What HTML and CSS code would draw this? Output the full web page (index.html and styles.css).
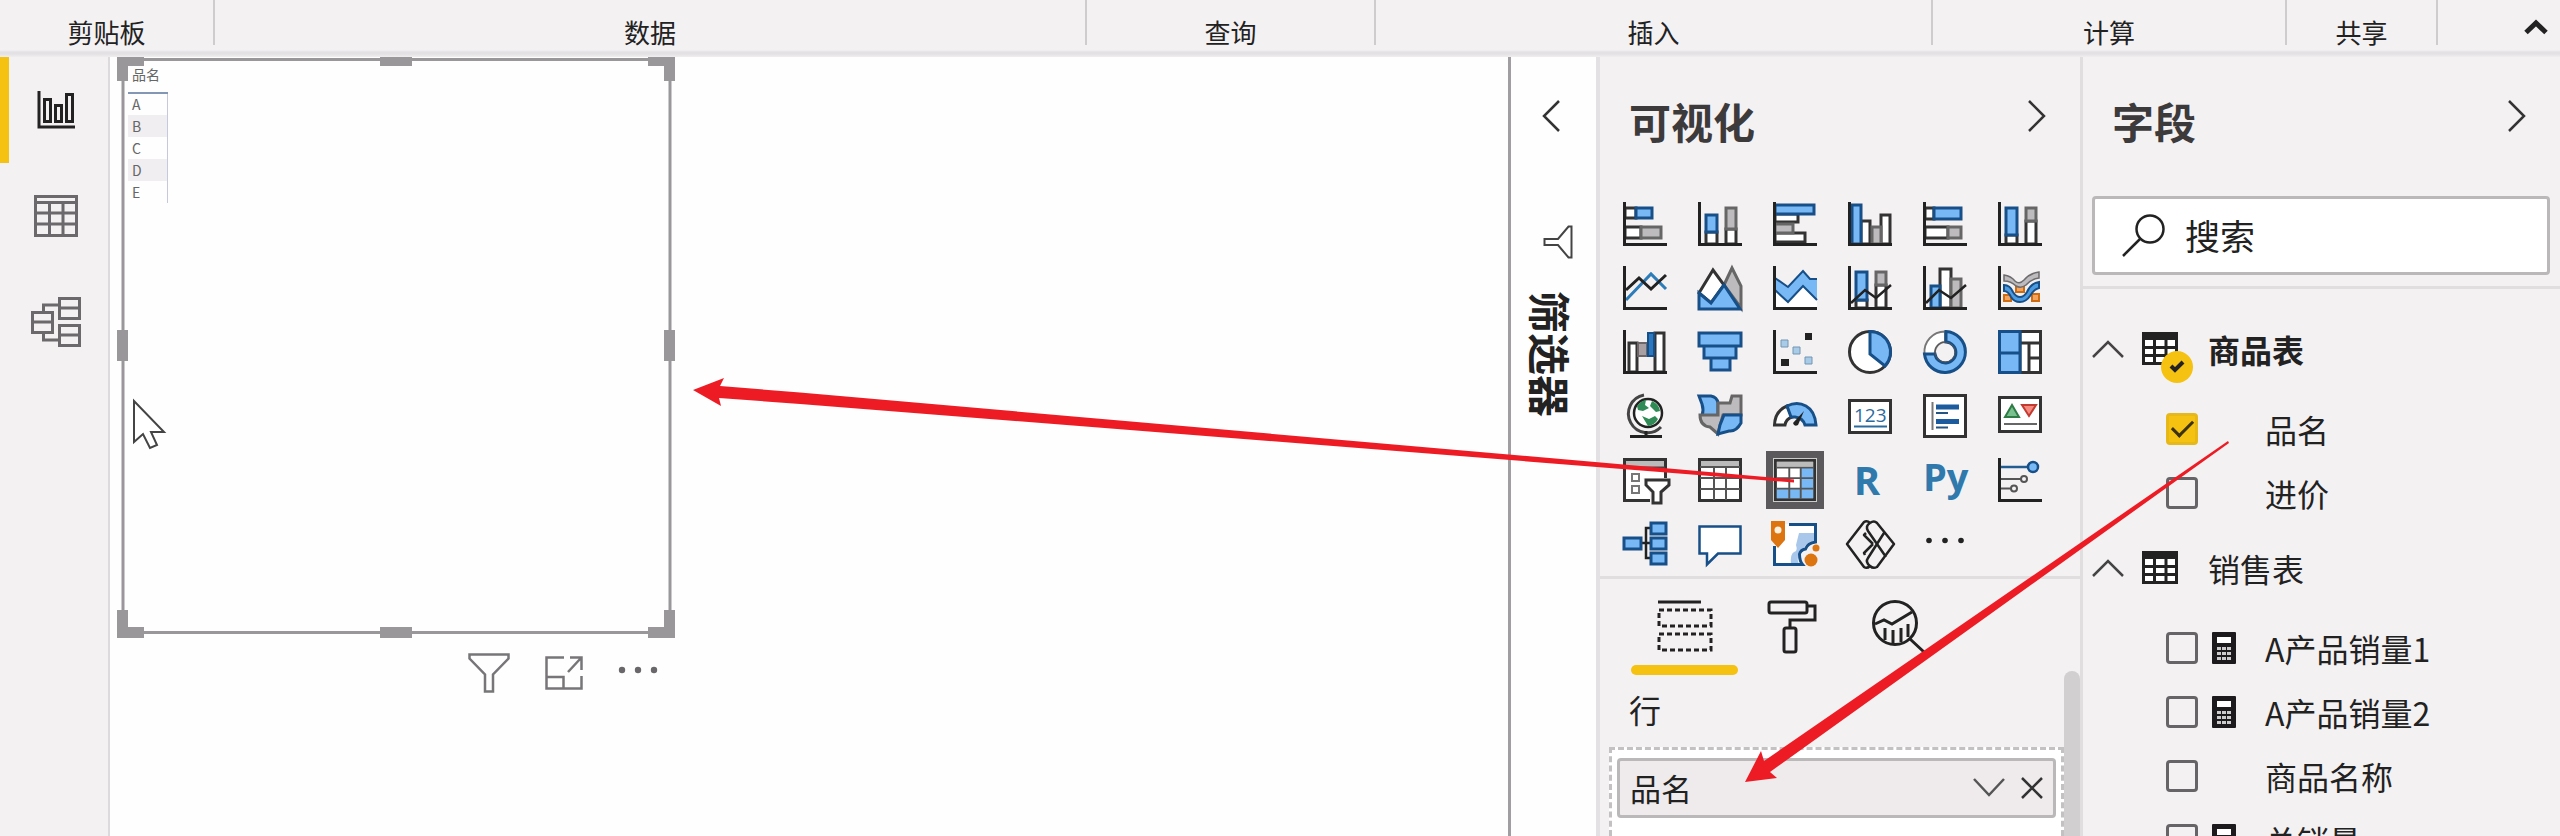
FILE: index.html
```html
<!DOCTYPE html>
<html lang="zh-CN">
<head>
<meta charset="utf-8">
<title>报表视图</title>
<link rel="stylesheet" href="styles.css">
</head>
<body>
<header class="ribbon">
  <div class="group g-clip">剪贴板</div>
  <div class="group g-data">数据</div>
  <div class="group g-query">查询</div>
  <div class="group g-insert">插入</div>
  <div class="group g-calc">计算</div>
  <div class="group g-share">共享</div>
  <button class="collapse" aria-label="折叠功能区"><svg width="24" height="16" viewBox="0 0 24 16"><path d="M2 13.500 12 4l10 9.500" fill="none" stroke="#222" stroke-width="5"/></svg></button>
</header>

<main class="workspace">
  <nav class="rail">
    <button class="view active" aria-label="报表"><svg width="38" height="38" viewBox="0 0 38 38" fill="none" stroke="#222" stroke-width="3"><path d="M2 0v36h36"/><rect x="7.500" y="8.500" width="6" height="22"/><rect x="18.500" y="14.500" width="6" height="16"/><rect x="29.500" y="3.500" width="6" height="27"/></svg></button>
    <button class="view" aria-label="数据"><svg width="44" height="42" viewBox="0 0 44 42" fill="none" stroke="#6b696b" stroke-width="3"><rect x="1.500" y="1.500" width="41" height="39"/><path d="M1 7.500h42M1 18h42M1 29h42M15.500 7v34M29 7v34"/></svg></button>
    <button class="view" aria-label="模型"><svg width="50" height="50" viewBox="0 0 50 50" fill="none" stroke="#6b696b" stroke-width="3"><rect x="28.500" y="1.500" width="20" height="20"/><rect x="28.500" y="28.500" width="20" height="20"/><rect x="1.500" y="15.500" width="20" height="20"/><path d="M28 11h20M28 38h20M1 25h20M12.500 15V8H28M12.500 36v7H28"/></svg></button>
  </nav>

  <section class="canvas">
    <div class="visual">
      <table class="matrix">
        <thead><tr><th>品名</th></tr></thead>
        <tbody><tr><td>A</td></tr><tr><td>B</td></tr><tr><td>C</td></tr><tr><td>D</td></tr><tr><td>E</td></tr></tbody>
      </table>
      <svg class="frame" viewBox="0 0 558 581" preserveAspectRatio="none">
        <rect x="6" y="2.500" width="547" height="573" fill="none" stroke="#99979a" stroke-width="3"/>
        <g fill="#99979a"><path d="M0 0h27v9H11v15H0zM531 0h27v24h-11V9h-16zM0 553h11v17h16v11H0zM547 553h11v28h-27v-11h16z"/><path d="M263 0h32v9h-32zM263 570h32v11h-32zM0 273h11v31H0zM547 273h11v31h-11z"/></g>
      </svg>
      <div class="visual-tools">
        <button aria-label="筛选器"><svg width="42" height="40" viewBox="0 0 42 40"><path d="M1.500 1.500h39v4L25 21.500v17h-8v-17L1.500 5.500z" fill="none" stroke="#777578" stroke-width="2.500"/></svg></button>
        <button aria-label="焦点模式"><svg width="38" height="34" viewBox="0 0 38 34" fill="none" stroke="#777578" stroke-width="2.500"><path d="M19 1.500H1.500v31h35V20M25 1.500h11.500V14M36 2 23 16M2 21h16.500v11"/></svg></button>
        <button aria-label="更多选项"><svg width="40" height="34" viewBox="0 0 40 34" fill="#69676a"><circle cx="4" cy="14" r="3.200"/><circle cx="20" cy="14" r="3.200"/><circle cx="36" cy="14" r="3.200"/></svg></button>
      </div>
    </div>
    <svg class="pointer" width="36" height="52" viewBox="0 0 36 52"><path d="M2 2v41l9-8 7 14 7-3-6-13h13z" fill="#fff" stroke="#444" stroke-width="2"/></svg>
  </section>

  <aside class="filters">
    <button aria-label="展开筛选器"><svg width="18" height="32" viewBox="0 0 18 32"><path d="M17 1 2 16l15 15" fill="none" stroke="#333" stroke-width="2.500"/></svg></button>
    <svg class="filters-icon" width="30" height="34" viewBox="0 0 30 34"><path d="M28.500 1.500v31h-3L15 20H1.500v-6H15L25.500 1.500z" fill="none" stroke="#444" stroke-width="2"/></svg>
    <h2 class="vertical">筛选器</h2>
  </aside>

  <aside class="viz">
    <div class="pane-head"><h2>可视化</h2><button aria-label="折叠可视化"><svg width="18" height="32" viewBox="0 0 18 32"><path d="M1 1l15 15L1 31" fill="none" stroke="#333" stroke-width="2.500"/></svg></button></div>
    <div class="gallery">
      <button aria-label="堆积条形图"><svg viewBox="0 0 44 44"><g class="w"><path d="M2 6h11v10H2zM2 25h16v11H2z"/></g><path class="b" d="M13 6h16v10H13z"/><path class="g" d="M18 25h20v11H18z"/><path class="ax" d="M1.500 0v42.500H44"/></svg></button>
      <button aria-label="堆积柱形图"><svg viewBox="0 0 44 44"><path class="w" d="M8 30h11v12H8zM28 27h10v15H28z"/><path class="b" d="M8 13h11v17H8z"/><path class="g" d="M28 6h10v21H28z"/><path class="ax" d="M1.500 0v42.500H44"/></svg></button>
      <button aria-label="簇状条形图"><svg viewBox="0 0 44 44"><path class="w" d="M2 12h23v8H2zM2 31h30v9H2z"/><path class="b" d="M2 3h39v9H2z"/><path class="g" d="M2 22h18v9H2z"/><path class="ax" d="M1.500 0v42.500H44"/></svg></button>
      <button aria-label="簇状柱形图"><svg viewBox="0 0 44 44"><path class="w" d="M13 19h9v23h-9zM33 13h9v29h-9z"/><path class="b" d="M4 3h9v39H4z"/><path class="g" d="M24 25h9v17h-9z"/><path class="ax" d="M1.500 0v42.500H44"/></svg></button>
      <button aria-label="百分比堆积条形图"><svg viewBox="0 0 44 44"><path class="w" d="M2 6h9v11H2zM2 25h23v11H2z"/><path class="b" d="M11 6h27v11H11z"/><path class="g" d="M25 25h13v11H25z"/><path class="ax" d="M1.500 0v42.500H44"/></svg></button>
      <button aria-label="百分比堆积柱形图"><svg viewBox="0 0 44 44"><path class="w" d="M8 33h11v9H8zM28 19h10v23H28z"/><path class="b" d="M8 6h11v27H8z"/><path class="g" d="M28 6h10v13H28z"/><path class="ax" d="M1.500 0v42.500H44"/></svg></button>

      <button aria-label="折线图"><svg viewBox="0 0 44 44"><path d="M3 34 28 8l15 15" fill="none" stroke="#2b7cb8" stroke-width="3"/><path d="M3 24 16 12l12 11L43 9" fill="none" stroke="#222" stroke-width="3"/><path class="ax" d="M1.500 0v42.500H44"/></svg></button>
      <button aria-label="分区图"><svg viewBox="0 0 44 44"><path class="g" d="M26 19 34 2l9 18v22z"/><path class="w" d="M1 27 15 4l11 15-13 18z"/><path class="b" d="M1 27l12 10 13-18 16 24H1z"/></svg></button>
      <button aria-label="堆积面积图"><svg viewBox="0 0 44 44"><path fill="#fff" d="M2 24l13 12 15-16 14 14v8H2z"/><path fill="#78b9f5" d="M2 12l13 9L30 5l7 8h7v21L30 20 15 36 2 24z"/><path d="M2 12l13 9L30 5l7 8h7M2 24l13 12 15-16 14 14" fill="none" stroke="#174f88" stroke-width="2"/><path class="ax" d="M1.500 0v42.500H44"/></svg></button>
      <button aria-label="折线和堆积柱形图"><svg viewBox="0 0 44 44"><path class="w" d="M8 34h11v8H8zM28 19h10v23H28z"/><path class="b" d="M8 6h11v28H8z"/><path class="g" d="M28 6h10v13H28z"/><path class="ax" d="M1.500 0v42.500H44"/><path d="M3 37l14-13 11 8 15-13" fill="none" stroke="#222" stroke-width="2.500"/></svg></button>
      <button aria-label="折线和簇状柱形图"><svg viewBox="0 0 44 44"><path class="w" d="M17 3h11v39H17z"/><path class="b" d="M8 20h9v22H8z"/><path class="g" d="M28 13h10v29H28z"/><path class="ax" d="M1.500 0v42.500H44"/><path d="M3 37l13-13 12 8 15-13" fill="none" stroke="#222" stroke-width="2.500"/></svg></button>
      <button aria-label="功能区图表"><svg viewBox="0 0 44 44"><g fill="#f2a35e" stroke="#cf6c10" stroke-width="2"><path d="M6 29h7v6H6zM18 20h8v6h-8zM34 28h7v7h-7z"/></g><path d="M6 9q7 1 11 6 4 4 9-1 6-7 15-8v6q-8 1-13 7-5 4-10 1-5-5-12-5z" fill="#bdbbbd" stroke="#6d6b6d" stroke-width="1.500"/><path d="M6 19q6 0 9 7 3 5 7 5t7-5q4-9 12-10v6q-5 1-9 8-4 6-10 6t-9-5q-3-6-7-6z" fill="#4d9be0" stroke="#174f88" stroke-width="2"/><path class="ax" d="M1.500 0v42.500H44"/></svg></button>

      <button aria-label="瀑布图"><svg viewBox="0 0 44 44"><path class="w" d="M6 13h8v29H6zM32 3h9v39h-9z"/><path d="M15 13h9v13h-9z" fill="#a9a0a3" stroke="#6d6669" stroke-width="2"/><path d="M25 3h6v23h-6z" fill="#2b78c0" stroke="#174f88" stroke-width="2"/><path class="ax" d="M1.500 0v42.500H44"/></svg></button>
      <button aria-label="漏斗图"><svg viewBox="0 0 44 44"><path class="b" d="M1 3h42v13H1zM6 16h32v12H6zM13 28h19v12H13z"/></svg></button>
      <button aria-label="散点图"><svg viewBox="0 0 44 44"><path d="M32 3h7v7h-7zM8 29h8v7H8z" fill="#222"/><path d="M8 10h7v7H8zM20 17h7v7h-7zM32 27h7v7h-7z" fill="#a8cbe8" stroke="#7295b5"/><path class="ax" d="M1.500 0v42.500H44"/></svg></button>
      <button aria-label="饼图"><svg viewBox="0 0 44 44"><circle cx="22" cy="22" r="20.500" class="w"/><path class="b" d="M22 1.500A20.500 20.500 0 0 1 37 36L22 24z"/></svg></button>
      <button aria-label="环形图"><svg viewBox="0 0 44 44"><path d="M1.500 24A20.500 20.500 0 0 1 22 1.500V12A10.500 10.500 0 0 0 12 24z" fill="#fff" stroke="#777" stroke-width="2"/><path class="b" d="M23 1.500A20.500 20.500 0 1 1 1.500 24H12a10.500 10.500 0 1 0 11-12z"/><circle cx="22" cy="22" r="10" fill="none" stroke="#555" stroke-width="1"/></svg></button>
      <button aria-label="树状图"><svg viewBox="0 0 44 44"><path class="w" d="M22 1.500h20.500v41H22zM22 13h20M31 13v29M31 28h11"/><path class="b" d="M1.500 1.500H22v41H1.500zM2 23h20"/></svg></button>

      <button aria-label="地图"><svg viewBox="0 0 44 44"><circle cx="25" cy="19" r="14" fill="#fff" stroke="#222" stroke-width="2.500"/><path d="M14 12q5-6 9-6l-1 5 4 3-6 3-5-1zM29 7q7 3 8 10l-4 1-6-6zM19 22l7 3 6-3 3 3q-3 6-10 7z" fill="#2f8a55"/><path d="M21 1A19 19 0 1 0 38 33" fill="none" stroke="#444" stroke-width="3"/><path d="M23 37v5M7 42.500h32" stroke="#222" stroke-width="3"/></svg></button>
      <button aria-label="着色地图"><svg viewBox="0 0 44 44"><path class="b" d="M1 2h12q6 1 7 7v13H4q2-6 0-12z"/><path class="g" d="M20 9h12l2-7h9v19H25l-3 11-2 8-8-7Q2 32 2 21h18z"/><path class="b" d="M26 21h17v8q-5 9-12 8l-11 3 2-9z"/></svg></button>
      <button aria-label="仪表"><svg viewBox="0 0 44 44"><path class="w" d="M1.500 31Q2 17 14 12l5 11q-6 2-7 8z"/><path class="b" d="M14 12Q24 7 33 12q9 5 10 19H32q-2-7-10-8h-4z"/><path d="M31 17 25 31q-4 2-5-2z" fill="#222"/></svg></button>
      <button aria-label="卡片图"><svg viewBox="0 0 44 44"><rect class="w" x="1.500" y="6.500" width="41" height="32"/><text x="6" y="28" class="digits">123</text><path d="M6 32.500h33" stroke="#2c6a9d" stroke-width="2"/></svg></button>
      <button aria-label="多行卡"><svg viewBox="0 0 44 44"><rect class="w" x="1.500" y="1.500" width="41" height="41"/><path d="M9.500 8v28" stroke="#777" stroke-width="2"/><path d="M13 13h23M13 27.500h23" stroke="#1c5c9e" stroke-width="5"/><path d="M13 19h12M13 33.500h12" stroke="#245481" stroke-width="2"/></svg></button>
      <button aria-label="KPI"><svg viewBox="0 0 44 44"><rect class="w" x="1.500" y="3.500" width="41" height="34"/><path d="M7 23h14L14 11z" fill="#78c08d" stroke="#2e7b46" stroke-width="2"/><path d="M24 11h14l-7 11z" fill="#f58b7e" stroke="#c33a30" stroke-width="2"/><path d="M6 30h33" stroke="#666" stroke-width="2"/></svg></button>

      <button aria-label="切片器"><svg viewBox="0 0 44 44"><rect class="w" x="1.500" y="1.500" width="41" height="41"/><path d="M3 3h38v6H3z" fill="#bbb"/><path d="M2 9.500h40" stroke="#444" stroke-width="2"/><g fill="#fff" stroke="#777" stroke-width="2"><path d="M9 16h7v7H9zM9 28h7v7H9z"/></g><path d="M20 20h28v26H27V36z" fill="#f4f1f3"/><path class="w" d="M23 22h23v5l-8 7v11h-8V34l-7-7z"/></svg></button>
      <button aria-label="表"><svg viewBox="0 0 44 44"><rect class="w" x="1.500" y="1.500" width="41" height="41"/><path d="M3 3h38v5H3z" fill="#bbb"/><path d="M2 9h40M2 20h40M2 31h40M16 9v33M28 9v33" stroke="#555" stroke-width="2"/></svg></button>
      <button class="selected" aria-label="矩阵" aria-pressed="true"><svg viewBox="0 0 44 44"><rect class="w" x="1.500" y="1.500" width="41" height="41"/><path d="M3 3h38v5H3z" fill="#bbb"/><path d="M28 9h13v32H3V31h25z" fill="#78b9f5"/><path d="M2 9h40M2 20h40M2 31h40M16 9v33M28 9v33" stroke="#555" stroke-width="2"/></svg></button>
      <button class="lang">R</button>
      <button class="lang py">Py</button>
      <button aria-label="关键影响者"><svg viewBox="0 0 44 44" fill="none" stroke="#555" stroke-width="2"><path d="M3 9h27" stroke="#215d92" stroke-width="2.500"/><circle cx="35" cy="9" r="5" fill="#78b9f5" stroke="#174f88" stroke-width="2.500"/><path d="M3 21h20M3 30.500h10"/><circle cx="26" cy="21" r="3"/><circle cx="16" cy="30.500" r="3"/><path class="ax" d="M1.500 0v42.500H44"/></svg></button>

      <button aria-label="分解树"><svg viewBox="0 0 44 44"><path d="M17 21h11M28 6h-5v30h5" fill="none" stroke="#222" stroke-width="2.500"/><path class="b" d="M1 16h17v11H1zM28 1h15v11H28zM28 16h15v11H28zM28 31h15v11H28z"/></svg></button>
      <button aria-label="问答"><svg viewBox="0 0 44 44"><path d="M1.500 4.500h41v27H20l-11 11v-11H1.500z" fill="#fff" stroke="#174f88" stroke-width="2.500"/></svg></button>
      <button aria-label="ArcGIS 地图"><svg viewBox="0 0 44 44"><path d="M2 2h41v19q-8 1-10 6-2 4-6 5-1 8 2 11H2z" fill="#fff"/><path d="M26 11h15v8q-8 1-10 7-5 2-6 7-1 5 1 9h-8q-1-10 3-12 4-1 2-7z" fill="#a9c7ea"/><path d="M16 2.500h26.500V20q-8 1-10 7-5 1-6 5 0 7 3 10.500H1.500V24" fill="none" stroke="#174f88" stroke-width="3"/><path d="M-2-1h14v19l-7 8-7-8z" fill="#dc7410"/><circle cx="5" cy="8" r="3.500" fill="#fff0df"/><circle cx="38" cy="38" r="6.500" fill="#dc7410"/><circle cx="43" cy="26" r="3.500" fill="#dc7410"/></svg></button>
      <button aria-label="Power Apps"><svg viewBox="0 0 44 44" fill="none" stroke="#222" stroke-width="2.500" stroke-linejoin="round"><path d="M22 1q-3-3-6-1L-1 22 16 45q3 2 6-1"/><path d="M22 1q4-3 7 0L46 22 29 45q-4 2-7-1-5-4-2-8L36 11M22 1q-5 3-2 8l18 26M18 11l-2 2 9 9M17 33l-1-2 9-9"/></svg></button>
      <button aria-label="更多视觉对象"><svg viewBox="0 0 44 44" fill="#222"><circle cx="6" cy="18.500" r="2.800"/><circle cx="22" cy="18.500" r="2.800"/><circle cx="38" cy="18.500" r="2.800"/></svg></button>
    </div>

    <div class="build">
      <div class="build-main">
        <div class="tabs">
          <button class="tab on" aria-label="字段"><svg width="54" height="54" viewBox="0 0 54 54" fill="none" stroke="#222" stroke-width="3"><path d="M0 2h43"/><path d="M1 10h52v16H1zM1 34h52v16H1z" stroke-dasharray="5 3"/></svg></button>
          <button class="tab" aria-label="格式"><svg width="50" height="54" viewBox="0 0 50 54" fill="none" stroke="#222" stroke-width="3"><rect x="2" y="2" width="38" height="11" rx="2"/><path d="M40 6h8v14H23v8"/><rect x="17" y="28" width="12" height="24" rx="2"/></svg></button>
          <button class="tab" aria-label="分析"><svg width="54" height="54" viewBox="0 0 54 54" fill="none" stroke="#222" stroke-width="3"><circle cx="23" cy="23" r="21.500"/><path d="M3 24l9-4 8 4 20-12M13 28v12M21 30v14M29 28v14M36 24v13M38 39l14 13"/></svg></button>
        </div>
        <h3>行</h3>
        <div class="well">
          <div class="chip"><span>品名</span>
            <button aria-label="选项"><svg width="32" height="20" viewBox="0 0 32 20"><path d="M1 1l15 16L31 1" fill="none" stroke="#555" stroke-width="2.500"/></svg></button>
            <button aria-label="删除"><svg width="22" height="22" viewBox="0 0 22 22"><path d="M1 1l20 20M21 1 1 21" stroke="#333" stroke-width="2.500"/></svg></button>
          </div>
        </div>
      </div>
      <div class="scrollbar"></div>
    </div>
  </aside>

  <aside class="fields">
    <div class="pane-head"><h2>字段</h2><button aria-label="折叠字段"><svg width="18" height="32" viewBox="0 0 18 32"><path d="M1 1l15 15L1 31" fill="none" stroke="#333" stroke-width="2.500"/></svg></button></div>
    <label class="search"><svg width="44" height="44" viewBox="0 0 44 44"><circle cx="28" cy="15" r="13.500" fill="none" stroke="#222" stroke-width="2.500"/><path d="M18 25 1 42" stroke="#222" stroke-width="2.500"/></svg><input type="text" placeholder="搜索" aria-label="搜索"></label>
    <div class="tree">
      <button class="entity strong"><svg class="caret" width="32" height="18" viewBox="0 0 32 18"><path d="M1 17 16 2l15 15" fill="none" stroke="#444" stroke-width="2.500"/></svg>
        <span class="entity-icon"><svg width="36" height="33" viewBox="0 0 36 33"><rect x="1.500" y="1.500" width="33" height="30" fill="#fff" stroke="#222" stroke-width="3"/><path d="M1 1h34v7H1z" fill="#222"/><path d="M1 15.500h34M1 23.500h34M12.500 8v24M24 8v24" stroke="#222" stroke-width="3"/></svg><svg class="badge" width="32" height="32" viewBox="0 0 32 32"><circle cx="16" cy="16" r="16" fill="#f5c211"/><path d="M10 15l4 4 8-8" fill="none" stroke="#222" stroke-width="4"/></svg></span>商品表</button>
      <label class="field"><input type="checkbox" checked><i></i>品名</label>
      <label class="field"><input type="checkbox"><i></i>进价</label>
      <button class="entity"><svg class="caret" width="32" height="18" viewBox="0 0 32 18"><path d="M1 17 16 2l15 15" fill="none" stroke="#444" stroke-width="2.500"/></svg>
        <span class="entity-icon"><svg width="36" height="33" viewBox="0 0 36 33"><rect x="1.500" y="1.500" width="33" height="30" fill="#fff" stroke="#222" stroke-width="3"/><path d="M1 1h34v7H1z" fill="#222"/><path d="M1 15.500h34M1 23.500h34M12.500 8v24M24 8v24" stroke="#222" stroke-width="3"/></svg></span>销售表</button>
      <label class="field"><input type="checkbox"><i><svg width="24" height="32" viewBox="0 0 24 32"><rect width="24" height="32" rx="1" fill="#1c1a1c"/><path d="M5 5h14v6H5z" fill="#fff"/><path d="M5 15h4v3H5zM10 15h4v3h-4zM15 15h4v3h-4zM5 20h4v3H5zM10 20h4v3h-4zM15 20h4v3h-4zM5 25h4v3H5zM10 25h4v3h-4zM15 25h4v3h-4z" fill="#ccc"/></svg></i>A产品销量1</label>
      <label class="field"><input type="checkbox"><i><svg width="24" height="32" viewBox="0 0 24 32"><rect width="24" height="32" rx="1" fill="#1c1a1c"/><path d="M5 5h14v6H5z" fill="#fff"/><path d="M5 15h4v3H5zM10 15h4v3h-4zM15 15h4v3h-4zM5 20h4v3H5zM10 20h4v3h-4zM15 20h4v3h-4zM5 25h4v3H5zM10 25h4v3h-4zM15 25h4v3h-4z" fill="#ccc"/></svg></i>A产品销量2</label>
      <label class="field"><input type="checkbox"><i></i>商品名称</label>
      <label class="field"><input type="checkbox"><i><svg width="24" height="32" viewBox="0 0 24 32"><rect width="24" height="32" rx="1" fill="#1c1a1c"/><path d="M5 5h14v6H5z" fill="#fff"/><path d="M5 15h4v3H5zM10 15h4v3h-4zM15 15h4v3h-4z" fill="#ccc"/></svg></i>总销量</label>
    </div>
  </aside>
</main>

<svg class="arrows" viewBox="0 0 2560 836" fill="#ed1c24"><path d="M693 390l31-12-4 8 80 6.500 994 87v3L800 404l-81-6 2 8z"/><path d="M1745 782l16-31 3 10 464-320 1 2-459 329 7 6z"/></svg>
</body>
</html>
```

FILE: styles.css
```css
* { box-sizing: border-box; }

body {
  margin: 0;
  height: 100vh;
  display: flex;
  flex-direction: column;
  position: relative;
  overflow: hidden;
  background: #fefefe;
  color: #222;
  font-family: "Noto Sans CJK SC", "Open Sans", sans-serif;
}

button {
  padding: 0;
  border: 0;
  background: none;
  color: inherit;
  font: inherit;
}

svg { display: block; overflow: visible; }
h2, h3 { margin: 0; }

/* Ribbon */
.ribbon {
  display: flex;
  flex: none;
  height: 57px;
  padding-bottom: 12px;
  background: linear-gradient(#f4f1f3 50px, #e4e1e4 52px, #e4e1e4 54px, #f1eef0 57px);
}
.group {
  display: flex;
  justify-content: center;
  align-items: flex-end;
  border-right: 2px solid #cfccce;
  font-size: 26px;
  line-height: 26px;
}
.g-clip { flex: 213; }
.g-data { flex: 870; }
.g-query { flex: 287; }
.g-insert { flex: 555; }
.g-calc { flex: 352; }
.g-share { flex: 149; }
.collapse {
  display: flex;
  flex: 110;
  justify-content: flex-end;
  align-items: flex-end;
  padding: 0 12px 10px 0;
}

.workspace { display: flex; flex: 1; min-height: 0; }

/* View switcher */
.rail {
  display: flex;
  flex: none;
  flex-direction: column;
  width: 110px;
  background: #f4f1f3;
  border-right: 2px solid #dcdadc;
}
.view {
  display: flex;
  justify-content: center;
  align-items: center;
  height: 106px;
  border-left: 9px solid transparent;
  padding-right: 5px;
}
.view.active { border-color: #f5c211; }

/* Canvas */
.canvas { flex: 1; position: relative; background: #fefefe; }
.visual {
  position: absolute;
  left: 7px;
  top: 0;
  width: 558px;
  height: 581px;
  padding: 7px 11px;
}
.frame { position: absolute; inset: 0; width: 100%; height: 100%; }
.matrix {
  border-collapse: collapse;
  font-size: 14px;
  line-height: 21px;
  color: #666;
}
.matrix th {
  padding: 0 7px 7px 4px;
  border-bottom: 2px solid #8397b5;
  font-weight: 400;
  text-align: left;
}
.matrix td { padding: 0 4px; border-right: 1px solid #c3cadb; }
.matrix tbody tr { height: 22px; }
.matrix tr:nth-child(even) { background: #f0eef0; }
.visual-tools {
  position: absolute;
  top: 596px;
  right: 17px;
  display: flex;
  gap: 35px;
}
.pointer { position: absolute; left: 22px; top: 342px; }

/* Filters pane */
.filters {
  display: flex;
  flex: none;
  flex-direction: column;
  align-items: center;
  width: 88px;
  padding: 43px 5px 0 0;
  background: #fefefe;
  border-left: 3px solid #a09ea0;
}
.filters-icon { margin: 93px 0 32px 14px; }
.vertical {
  writing-mode: vertical-rl;
  text-orientation: sideways;
  font-size: 42px;
  line-height: 40px;
}

/* Pane heading */
.pane-head {
  display: flex;
  justify-content: space-between;
  align-items: flex-start;
  height: 139px;
  padding: 43px 34px 0 29px;
}
.pane-head h2 { color: #3d3a3c; font-size: 42px; line-height: 42px; }

/* Visualizations pane */
.viz {
  display: flex;
  flex: none;
  flex-direction: column;
  width: 484px;
  background: #f4f1f3;
  border-left: 4px solid #e4e1e4;
}
.gallery {
  display: grid;
  grid-template-columns: repeat(6, 44px);
  gap: 20px 31px;
  padding: 6px 23px 10px;
  border-bottom: 3px solid #e1dee0;
}
.gallery button { width: 44px; height: 44px; }
.gallery svg { width: 44px; height: 44px; }
.gallery .selected {
  background: #fff;
  border: 1px solid #ccc;
  outline: 7px solid #5b595b;
}
.gallery .selected svg { width: 42px; height: 42px; }
.w { fill: #fff; stroke: #333; stroke-width: 3; }
.b { fill: #78b9f5; stroke: #174f88; stroke-width: 3; }
.g { fill: #bdbbbd; stroke: #666; stroke-width: 3; }
.ax { fill: none; stroke: #222; stroke-width: 3; }
.digits { fill: #2c6a9d; font-family: "Open Sans", sans-serif; font-size: 19px; }
.gallery .lang {
  padding-right: 6px;
  color: #2f79ad;
  font-family: "Open Sans", sans-serif;
  font-size: 40px;
  font-weight: 700;
  line-height: 44px;
}
.gallery .py { padding-bottom: 8px; font-size: 38px; line-height: 36px; }

.build { display: flex; flex: 1; min-height: 0; }
.build-main { display: flex; flex: 1; flex-direction: column; }
.tabs { display: flex; padding-left: 31px; }
.tab {
  display: flex;
  justify-content: center;
  align-items: flex-start;
  position: relative;
  width: 107px;
  height: 96px;
  padding-top: 21px;
}
.tab.on::after {
  content: "";
  position: absolute;
  inset: auto 0 0;
  height: 10px;
  border-radius: 5px;
  background: #f5c211;
}
.build h3 {
  padding: 14px 0 18px 29px;
  font-size: 32px;
  font-weight: 400;
  line-height: 40px;
}
.well {
  flex: 1;
  margin-left: 9px;
  padding: 8px 5px;
  background: #fff;
  border: 3px dashed #c4c1c3;
  border-bottom: 0;
}
.chip {
  display: flex;
  align-items: center;
  gap: 16px;
  height: 60px;
  padding: 0 10px;
  background: #efebec;
  border: 3px solid #bbb8ba;
  border-radius: 4px;
  font-size: 31px;
  line-height: 44px;
}
.chip span { flex: 1; }
.scrollbar {
  width: 16px;
  margin-top: 92px;
  border-radius: 8px 8px 0 0;
  background: #d2cfd1;
}

/* Fields pane */
.fields {
  display: flex;
  flex: none;
  flex-direction: column;
  width: 480px;
  background: #f4f1f3;
  border-left: 3px solid #e1dee0;
}
.search {
  display: flex;
  align-items: center;
  gap: 19px;
  height: 79px;
  margin: 0 10px 11px 9px;
  padding-left: 27px;
  background: #fff;
  border: 3px solid #bbb8ba;
  border-radius: 4px;
}
.search input {
  flex: 1;
  min-width: 0;
  padding: 0 0 2px;
  border: 0;
  outline: 0;
  background: none;
  font: inherit;
  font-size: 35px;
}
.search input::placeholder { color: #222; opacity: 1; }
.tree {
  display: flex;
  flex: 1;
  flex-direction: column;
  min-height: 0;
  overflow: hidden;
  padding-top: 17px;
  border-top: 3px solid #e1dee0;
  font-size: 32px;
}
.entity {
  display: flex;
  flex: none;
  align-items: center;
  height: 91px;
  padding: 0 0 6px 9px;
  text-align: left;
}
.strong { font-weight: 700; }
.caret { margin-right: 18px; }
.entity-icon { position: relative; margin-right: 30px; }
.badge { position: absolute; left: 19px; top: 19px; }
.field {
  display: flex;
  flex: none;
  align-items: center;
  height: 64px;
  padding-left: 83px;
}
.field input {
  appearance: none;
  width: 32px;
  height: 32px;
  margin: 0 14px 0 0;
  border: 3px solid #666466;
  border-radius: 4px;
}
.field input:checked {
  display: grid;
  place-items: center;
  background: #f5c211;
  border-color: #e6b818;
}
.field input:checked::after {
  content: "";
  width: 18px;
  height: 9px;
  border: solid #3c3210;
  border-width: 0 0 3px 3px;
  transform: translateY(-3px) rotate(-45deg);
}
.field i { width: 24px; height: 32px; margin-right: 29px; }

/* Annotation arrows */
.arrows {
  position: absolute;
  left: 0;
  top: 0;
  width: 100%;
  pointer-events: none;
}
```
